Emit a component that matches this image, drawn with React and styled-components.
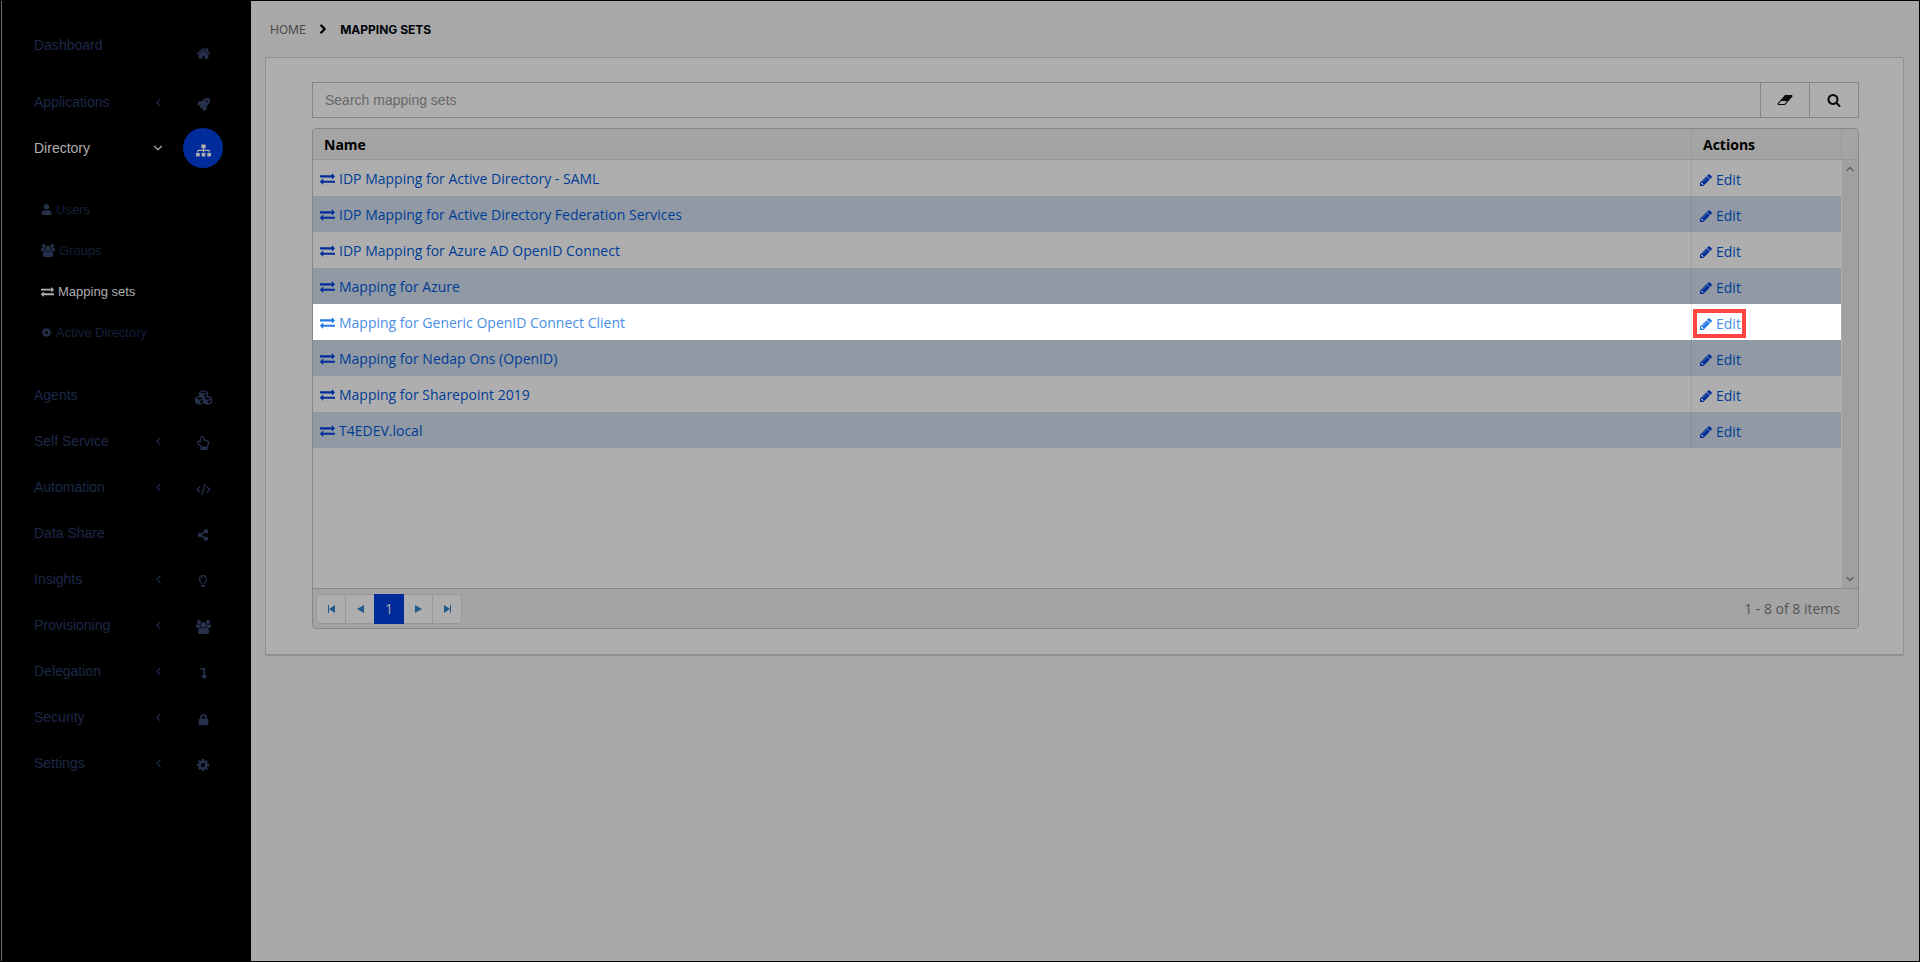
import React from "react";
import styled, { createGlobalStyle, css } from "styled-components";
import {
  FaRocket,
  FaSitemap,
  FaUser,
  FaCubes,
  FaRegHandPointUp,
  FaShareAlt,
  FaRegLightbulb,
  FaLevelDownAlt,
  FaLock,
} from "react-icons/fa";
import {
  ChevronDown,
  ChevronLeft,
  ChevronRight,
  ChevronUp,
  CodeXml,
} from "lucide-react";

const GlobalStyle = createGlobalStyle`
  * {
    box-sizing: border-box;
  }
  body {
    margin: 0;
    background: #a9a9a9;
    font-family: "Open Sans", "Noto Sans", sans-serif;
    font-size: 14px;
  }
  button, input {
    font: inherit;
    color: inherit;
  }
  a {
    color: inherit;
    text-decoration: none;
  }
`;

const Page = styled.div`
  display: flex;
  min-height: 100vh;
  border: 1px solid #000;
`;
const Sidebar = styled.nav`
  flex: 0 0 250px;
  padding-top: 22px;
  border-left: 1px solid #6e6e6e;
  background: #000;
  font-family: "Liberation Sans", Arial, sans-serif;
`;
const List = styled.ul`
  margin: 0;
  padding: 0;
  list-style: none;
`;
const MenuLink = styled.a`
  display: flex;
  align-items: center;
  height: ${({ $tall }) => ($tall ? 56 : 46)}px;
  padding: 0 28px 0 32px;
  font-size: 14px;
  color: ${({ $active }) => ($active ? "#aeaeae" : "#1d2848")};
`;
const MenuLabel = styled.span`
  flex: 1;
  ${({ $tall }) => $tall && "padding-bottom: 12px;"}
`;
const Arrow = styled.span`
  display: flex;
  width: 14px;
  justify-content: center;
  margin-right: 18px;
`;
const MenuIcon = styled.span`
  display: flex;
  align-items: center;
  justify-content: center;
  width: 40px;
  height: 40px;
  padding-top: 4px;
  border-radius: 50%;
  color: ${({ $active }) => ($active ? "#aeaeae" : "#27314c")};
  background: ${({ $active }) => ($active ? "#002c9b" : "transparent")};
`;
const SubMenu = styled(List)`
  padding: 18px 0 19px;
`;
const SubLink = styled.a`
  display: flex;
  align-items: center;
  gap: 4px;
  height: 41px;
  padding-left: 39px;
  font-size: 13px;
  color: ${({ $active }) => ($active ? "#aeaeae" : "#151f3b")};
  svg {
    color: ${({ $active }) => ($active ? "#aeaeae" : "#27314c")};
  }
`;
const Main = styled.main`
  flex: 1;
  min-width: 0;
  padding: 0 15px 24px 14px;
`;
const Breadcrumb = styled.div`
  display: flex;
  align-items: center;
  gap: 10px;
  height: 56px;
  padding: 0 5px;
  font-family: Inter, sans-serif;
  font-size: 12px;
  color: #4b4b4b;
  svg {
    color: #000;
  }
`;
const Current = styled.strong`
  font-weight: 700;
  color: #00040c;
`;
const Card = styled.section`
  padding: 24px 44px 25px 46px;
  border: 1px solid #909090;
  border-bottom-width: 2px;
  border-radius: 2px;
  background: #aeaeae;
`;
const SearchBar = styled.form`
  display: flex;
  height: 36px;
  margin-bottom: 10px;
`;
const SearchInput = styled.input`
  flex: 1;
  min-width: 0;
  padding: 0 12px;
  border: 1px solid #868686;
  border-radius: 0;
  background: #aeaeae;
  font-family: "Liberation Sans", Arial, sans-serif;
  outline: none;
  &::placeholder {
    color: #686868;
    opacity: 1;
  }
`;
const SearchButton = styled.button`
  display: flex;
  align-items: center;
  justify-content: center;
  width: 49px;
  padding: 0;
  border: 1px solid #868686;
  border-left: 0;
  background: #aeaeae;
  color: #0a0a0a;
`;
const Grid = styled.div`
  overflow: hidden;
  border: 1px solid #868686;
  border-radius: 4px;
`;
const GridContent = styled.div`
  display: flex;
  align-items: stretch;
  min-height: 459px;
`;
const TableArea = styled.div`
  flex: 1;
`;
const Table = styled.table`
  width: 100%;
  border-collapse: separate;
  border-spacing: 0;
  table-layout: fixed;
`;
const Th = styled.th`
  width: ${({ $width }) => $width || "auto"};
  height: 31px;
  padding: 0 11px;
  border-bottom: 1px solid #969696;
  border-left: ${({ $line }) => ($line ? "1px solid #989898" : "0")};
  background: #a4a4a4;
  color: #000;
  font-weight: 700;
  text-align: left;
`;
const Td = styled.td`
  position: relative;
  height: 36px;
  padding: ${({ $line }) => ($line ? "2px 7px 0" : "0 7px")};
  border-left: ${({ $line }) => ($line ? "1px solid rgba(0, 0, 0, 0.08)" : "0")};
`;
const Row = styled.tr`
  color: #003c96;
  svg {
    color: #002e9c;
  }
  &:nth-child(even) {
    background: #919aa4;
  }
  ${({ $focus }) =>
    $focus &&
    css`
      background: #fff;
      color: #4a90e8;
      svg {
        color: #2478e4;
      }
    `}
`;
const RowLink = styled.a`
  display: inline-flex;
  align-items: center;
  gap: ${({ $tight }) => ($tight ? 3 : 4)}px;
  vertical-align: middle;
`;
const Marker = styled.span`
  position: absolute;
  top: 5px;
  left: 1px;
  width: 53px;
  height: 29px;
  border: 4px solid #ff4343;
`;
const Side = styled.div`
  display: flex;
  flex-direction: column;
  width: 17px;
`;
const SideHead = styled.div`
  height: 31px;
  border-left: 1px solid #989898;
  border-bottom: 1px solid #969696;
  background: #a4a4a4;
`;
const Scrollbar = styled.div`
  display: flex;
  flex: 1;
  flex-direction: column;
  align-items: center;
  justify-content: space-between;
  margin-left: 1px;
  padding: 3px 0;
  background: #a0a0a0;
  color: #636363;
`;
const PagerBar = styled.div`
  display: flex;
  align-items: center;
  justify-content: space-between;
  height: 40px;
  padding: 0 18px 0 3px;
  border-top: 1px solid #868686;
  background: #a4a4a4;
  color: #555;
`;
const Pager = styled.div`
  display: flex;
  height: 30px;
  border: 1px solid #989898;
  border-radius: 4px;
  background: #aeaeae;
`;
const PageButton = styled.button`
  display: flex;
  align-items: center;
  justify-content: center;
  width: ${({ $line }) => ($line ? 29 : 28)}px;
  padding: 0;
  border: 0;
  border-left: ${({ $line }) => ($line ? "1px solid #989898" : "0")};
  background: transparent;
  color: #205a8c;
  ${({ $active }) =>
    $active &&
    css`
      width: 30px;
      height: 30px;
      margin-top: -1px;
      background: #002c9b;
      color: #aeaeae;
    `}
`;

const paths = {
  exchange: [
    1792,
    "M1792 1184v192q0 13-9.5 22.5t-22.5 9.5h-1376v192q0 13-9.5 22.5t-22.5 9.5q-12 0-24-10l-319-320q-9-9-9-22 0-14 9-23l320-320q9-9 23-9 13 0 22.5 9.5t9.5 22.5v192h1376q13 0 22.5 9.5t9.5 22.5zm0-544q0 14-9 23l-320 320q-9 9-23 9-13 0-22.5-9.5t-9.5-22.5v-192h-1376q-13 0-22.5-9.5t-9.5-22.5v-192q0-13 9.5-22.5t22.5-9.5h1376v-192q0-14 9-23t23-9q12 0 24 10l319 319q9 9 9 23z",
  ],
  users: [
    1920,
    "M593 896q-162 5-265 128h-134q-82 0-138-40.5t-56-118.5q0-353 124-353 6 0 43.5 21t97.5 42.5 119 21.5q67 0 133-23-5 37-5 66 0 139 81 256zm1071 637q0 120-73 189.5t-194 69.5h-874q-121 0-194-69.5t-73-189.5q0-53 3.5-103.5t14-109 26.5-108.5 43-97.5 62-81 85.5-53.5 111.5-20q10 0 43 21.5t73 48 107 48 135 21.5 135-21.5 107-48 73-48 43-21.5q61 0 111.5 20t85.5 53.5 62 81 43 97.5 26.5 108.5 14 109 3.5 103.5zm-1024-1277q0 106-75 181t-181 75-181-75-75-181 75-181 181-75 181 75 75 181zm704 384q0 159-112.5 271.5t-271.5 112.5-271.5-112.5-112.5-271.5 112.5-271.5 271.5-112.5 271.5 112.5 112.5 271.5zm576 225q0 78-56 118.5t-138 40.5h-134q-103-123-265-128 81-117 81-256 0-29-5-66 66 23 133 23 59 0 119-21.5t97.5-42.5 43.5-21q124 0 124 353zm-128-609q0 106-75 181t-181 75-181-75-75-181 75-181 181-75 181 75 75 181z",
  ],
  pencil: [
    1792,
    "M491 1536l91-91-235-235-91 91v107h128v128h107zm523-928q0-22-22-22-10 0-17 7l-542 542q-7 7-7 17 0 22 22 22 10 0 17-7l542-542q7-7 7-17zm-54-192l416 416-832 832h-416v-416zm683 96q0 53-37 90l-166 166-416-416 166-165q36-38 90-38 53 0 91 38l235 234q37 39 37 91z",
  ],
  search: [
    1792,
    "M1216 832q0-185-131.5-316.5t-316.5-131.5-316.5 131.5-131.5 316.5 131.5 316.5 316.5 131.5 316.5-131.5 131.5-316.5zm512 832q0 52-38 90t-90 38q-54 0-90-38l-343-342q-179 124-399 124-143 0-273.5-55.5t-225-150-150-225-55.5-273.5 55.5-273.5 150-225 225-150 273.5-55.5 273.5 55.5 225 150 150 225 55.5 273.5q0 220-124 399l343 343q37 37 37 90z",
  ],
  eraser: [
    2048,
    "M960 1408l336-384h-768l-336 384h768zm1013-1077q15 34 9.5 71.5t-30.5 65.5l-896 1024q-38 44-96 44h-768q-38 0-69.5-20.5t-47.5-54.5q-15-34-9.5-71.5t30.5-65.5l896-1024q38-44 96-44h768q38 0 69.5 20.5t47.5 54.5z",
  ],
  home: [
    1792,
    "M1472 992v480q0 26-19 45t-45 19h-384v-384h-256v384h-384q-26 0-45-19t-19-45v-480q0-1 .5-3t.5-3l575-474 575 474q1 2 1 6zm223-69l-62 74q-8 9-21 11h-3q-13 0-21-7l-692-577-692 577q-12 8-24 7-13-2-21-11l-62-74q-8-10-7-23.5t11-21.5l719-599q32-26 76-26t76 26l244 204v-195q0-14 9-23t23-9h192q14 0 23 9t9 23v408l219 182q10 8 11 21.5t-7 23.5z",
  ],
  cog: [
    1792,
    "M1152 896q0-106-75-181t-181-75-181 75-75 181 75 181 181 75 181-75 75-181zm512-109v222q0 12-8 23t-20 13l-185 28q-19 54-39 91 35 50 107 138 10 12 10 25t-9 23q-27 37-99 108t-94 71q-12 0-26-9l-138-108q-44 23-91 38-16 136-29 186-7 28-36 28h-222q-14 0-24.5-8.5t-11.5-21.5l-28-184q-49-16-90-37l-141 107q-10 9-25 9-14 0-25-11-126-114-165-168-7-10-7-23 0-12 8-23 15-21 51-66.5t54-70.5q-27-50-41-99l-183-27q-13-2-21-12.5t-8-23.5v-222q0-12 8-23t19-13l186-28q14-46 39-92-40-57-107-138-10-12-10-24 0-10 9-23 26-36 98.5-107.5t94.5-71.5q13 0 26 10l138 107q44-23 91-38 16-136 29-186 7-28 36-28h222q14 0 24.5 8.5t11.5 21.5l28 184q49 16 90 37l142-107q9-9 24-9 13 0 25 10 129 119 165 170 7 8 7 22 0 12-8 23-15 21-51 66.5t-54 70.5q26 50 41 98l183 28q13 2 21 12.5t8 23.5z",
  ],
};

const Glyph = ({ name, size = 14 }) => {
  const [width, d] = paths[name];
  return (
    <svg
      width={Math.round((size * width) / 1792)}
      height={size}
      viewBox={`0 0 ${width} 1792`}
      fill="currentColor"
      aria-hidden="true"
    >
      <path d={d} />
    </svg>
  );
};

const PagerIcon = ({ flip, bar }) => (
  <svg width="9" height="8" viewBox="0 0 9 8" fill="currentColor">
    <g transform={flip ? "translate(9 0) scale(-1 1)" : undefined}>
      <path d={bar ? "M8 0v8L2 4z" : "M8 0v8L1 4z"} />
      {bar && <path d="M1 0h1v8H1z" />}
    </g>
  </svg>
);

const menu = [
  { label: "Dashboard", icon: <Glyph name="home" size={15} />, tall: true },
  { label: "Applications", icon: <FaRocket size={13} />, arrow: true },
  {
    label: "Directory",
    icon: <FaSitemap size={15} />,
    arrow: true,
    active: true,
    children: [
      { label: "Users", icon: <FaUser size={11} /> },
      { label: "Groups", icon: <Glyph name="users" size={13} /> },
      {
        label: "Mapping sets",
        icon: <Glyph name="exchange" size={13} />,
        active: true,
      },
      { label: "Active Directory", icon: <Glyph name="cog" size={11} /> },
    ],
  },
  { label: "Agents", icon: <FaCubes size={17} /> },
  { label: "Self Service", icon: <FaRegHandPointUp size={14} />, arrow: true },
  {
    label: "Automation",
    icon: <CodeXml size={15} strokeWidth={2} />,
    arrow: true,
  },
  { label: "Data Share", icon: <FaShareAlt size={12} /> },
  { label: "Insights", icon: <FaRegLightbulb size={12} />, arrow: true },
  {
    label: "Provisioning",
    icon: <Glyph name="users" size={14} />,
    arrow: true,
  },
  { label: "Delegation", icon: <FaLevelDownAlt size={11} />, arrow: true },
  { label: "Security", icon: <FaLock size={11} />, arrow: true },
  { label: "Settings", icon: <Glyph name="cog" size={14} />, arrow: true },
];

const mappings = [
  "IDP Mapping for Active Directory - SAML",
  "IDP Mapping for Active Directory Federation Services",
  "IDP Mapping for Azure AD OpenID Connect",
  "Mapping for Azure",
  "Mapping for Generic OpenID Connect Client",
  "Mapping for Nedap Ons (OpenID)",
  "Mapping for Sharepoint 2019",
  "T4EDEV.local",
];
const focused = 4;

const MenuItem = ({ item }) => (
  <li>
    <MenuLink href="#" $active={item.active} $tall={item.tall}>
      <MenuLabel $tall={item.tall}>{item.label}</MenuLabel>
      {item.arrow && (
        <Arrow>
          {item.active ? <ChevronDown size={14} /> : <ChevronLeft size={13} />}
        </Arrow>
      )}
      <MenuIcon $active={item.active}>{item.icon}</MenuIcon>
    </MenuLink>
    {item.children && (
      <SubMenu>
        {item.children.map((child) => (
          <li key={child.label}>
            <SubLink href="#" $active={child.active}>
              {child.icon}
              {child.label}
            </SubLink>
          </li>
        ))}
      </SubMenu>
    )}
  </li>
);

const App = () => {
  return (
    <>
      <GlobalStyle />
      <Page>
        <Sidebar>
          <List>
            {menu.map((item) => (
              <MenuItem key={item.label} item={item} />
            ))}
          </List>
        </Sidebar>
        <Main>
          <Breadcrumb>
            <a href="#">HOME</a>
            <ChevronRight size={14} strokeWidth={4} />
            <Current>MAPPING SETS</Current>
          </Breadcrumb>
          <Card>
            <SearchBar>
              <SearchInput
                type="text"
                aria-label="Search mapping sets"
                placeholder="Search mapping sets"
              />
              <SearchButton type="button" aria-label="Clear">
                <Glyph name="eraser" />
              </SearchButton>
              <SearchButton type="button" aria-label="Search">
                <Glyph name="search" />
              </SearchButton>
            </SearchBar>
            <Grid>
              <GridContent>
                <TableArea>
                  <Table>
                    <thead>
                      <tr>
                        <Th>Name</Th>
                        <Th $line $width="150px">
                          Actions
                        </Th>
                      </tr>
                    </thead>
                    <tbody>
                      {mappings.map((name, i) => (
                        <Row key={name} $focus={i === focused}>
                          <Td>
                            <RowLink href="#">
                              <Glyph name="exchange" size={15} />
                              {name}
                            </RowLink>
                          </Td>
                          <Td $line>
                            <RowLink href="#" $tight>
                              <Glyph name="pencil" />
                              Edit
                            </RowLink>
                            {i === focused && <Marker />}
                          </Td>
                        </Row>
                      ))}
                    </tbody>
                  </Table>
                </TableArea>
                <Side>
                  <SideHead />
                  <Scrollbar>
                    <ChevronUp size={12} strokeWidth={3} />
                    <ChevronDown size={12} strokeWidth={3} />
                  </Scrollbar>
                </Side>
              </GridContent>
              <PagerBar>
                <Pager>
                  <PageButton aria-label="First page">
                    <PagerIcon bar />
                  </PageButton>
                  <PageButton $line aria-label="Previous page">
                    <PagerIcon />
                  </PageButton>
                  <PageButton $active>1</PageButton>
                  <PageButton aria-label="Next page">
                    <PagerIcon flip />
                  </PageButton>
                  <PageButton $line aria-label="Last page">
                    <PagerIcon flip bar />
                  </PageButton>
                </Pager>
                <span>1 - 8 of 8 items</span>
              </PagerBar>
            </Grid>
          </Card>
        </Main>
      </Page>
    </>
  );
};

export default App;
